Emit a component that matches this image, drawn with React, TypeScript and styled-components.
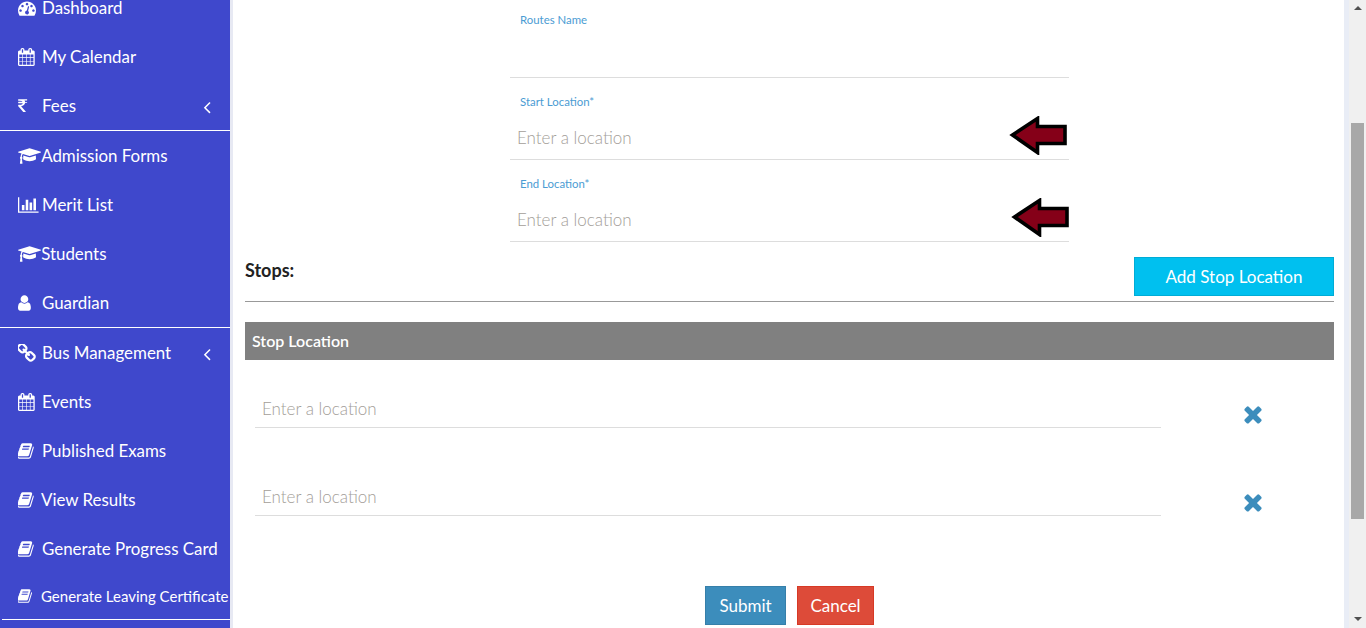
import React from 'react';
import styled, { createGlobalStyle } from 'styled-components';

const GlobalStyle = createGlobalStyle`
  html, body {
    margin: 0;
    height: 100%;
    overflow: hidden;
    font-family: "Lato", "Noto Sans", sans-serif;
  }
  * { box-sizing: border-box; }
`;

// glyph outlines in the old 1792 unit grid the page's icon font used
const glyphs = {
  dashboard: {
    box: '0 0 1792 1792',
    d: 'M384 1152q0-53-37.5-90.5t-90.5-37.5-90.5 37.5-37.5 90.5 37.5 90.5 90.5 37.5 90.5-37.5 37.5-90.5zm192-448q0-53-37.5-90.5t-90.5-37.5-90.5 37.5-37.5 90.5 37.5 90.5 90.5 37.5 90.5-37.5 37.5-90.5zm428 481l101-382q6-26-7.5-48.5t-38.5-29.5-48 6.5-30 39.5l-101 382q-60 5-107 43.5t-63 98.5q-20 77 20 146t117 89 146-20 89-117q16-60-6-117t-72-91zm660-33q0-53-37.5-90.5t-90.5-37.5-90.5 37.5-37.5 90.5 37.5 90.5 90.5 37.5 90.5-37.5 37.5-90.5zm-640-640q0-53-37.5-90.5t-90.5-37.5-90.5 37.5-37.5 90.5 37.5 90.5 90.5 37.5 90.5-37.5 37.5-90.5zm448 192q0-53-37.5-90.5t-90.5-37.5-90.5 37.5-37.5 90.5 37.5 90.5 90.5 37.5 90.5-37.5 37.5-90.5zm320 448q0 261-141 483-19 29-54 29h-1402q-35 0-54-29-141-221-141-483 0-182 71-348t191-286 286-191 348-71 348 71 286 191 191 286 71 348z',
  },
  calendar: {
    box: '64 0 1664 1792',
    d: 'M192 1664h288v-288h-288v288zm352 0h320v-288h-320v288zm-352-352h288v-320h-288v320zm352 0h320v-320h-320v320zm-352-384h288v-288h-288v288zm736 736h320v-288h-320v288zm-384-736h320v-288h-320v288zm768 736h288v-288h-288v288zm-384-352h320v-320h-320v320zm-352-864v-288q0-13-9.5-22.5t-22.5-9.5h-64q-13 0-22.5 9.5t-9.5 22.5v288q0 13 9.5 22.5t22.5 9.5h64q13 0 22.5-9.5t9.5-22.5zm736 864h288v-320h-288v320zm-384-384h320v-288h-320v288zm384 0h288v-288h-288v288zm32-480v-288q0-13-9.5-22.5t-22.5-9.5h-64q-13 0-22.5 9.5t-9.5 22.5v288q0 13 9.5 22.5t22.5 9.5h64q13 0 22.5-9.5t9.5-22.5zm384-64v1280q0 52-38 90t-90 38h-1408q-52 0-90-38t-38-90v-1280q0-52 38-90t90-38h128v-96q0-66 47-113t113-47h64q66 0 113 47t47 113v96h384v-96q0-66 47-113t113-47h64q66 0 113 47t47 113v96h128q52 0 90 38t38 90z',
  },
  rupee: {
    box: '431 0 1000 1792',
    d: 'M1345 470v64q0 14-9 23t-23 9h-168q-23 144-129 234t-276 110q167 178 459 536 14 16 4 34-8 18-29 18h-195q-16 0-25-12-306-367-498-571-9-9-9-22v-80q0-14 9.5-23.5t22.5-9.5h112q132 0 212.5-43t102.5-125h-427q-14 0-23-9t-9-23v-64q0-14 9-23t23-9h413q-57-113-268-113h-145q-13 0-22.5-9.5t-9.5-22.5v-83q0-14 9-23t23-9h832q14 0 23 9t9 23v64q0 14-9 23t-23 9h-233q47 61 64 144h171q14 0 23 9t9 23z',
  },
  cap: {
    box: '0 0 2304 1792',
    d: 'M1774 836l18 316q4 69-82 128t-235 93.5-323 34.5-323-34.5-235-93.5-82-128l18-316 574 181q22 7 48 7t48-7zm530-324q0 23-22 31l-1120 352q-4 1-10 1t-10-1l-652-206q-43 34-71 111.5t-34 178.5q63 36 63 109 0 69-58 107l58 433q2 14-8 25-9 11-24 11h-192q-15 0-24-11-10-11-8-25l58-433q-58-38-58-107 0-73 65-111 11-207 98-330l-333-104q-22-8-22-31t22-31l1120-352q4-1 10-1t10 1l1120 352q22 8 22 31z',
  },
  bars: {
    box: '0 0 2048 1792',
    d: 'M640 896v512h-256v-512h256zm384-512v1024h-256v-1024h256zm1024 1152v128h-2048v-1536h128v1408h1920zm-640-896v768h-256v-768h256zm384-384v1152h-256v-1152h256z',
  },
  user: {
    box: '256 0 1280 1792',
    d: 'M1536 1399q0 109-62.5 187t-150.5 78h-854q-88 0-150.5-78t-62.5-187q0-85 8.5-160.5t31.5-152 58.5-131 94-89 134.5-34.5q131 128 313 128t313-128q76 0 134.5 34.5t94 89 58.5 131 31.5 152 8.5 160.5zm-256-887q0 159-112.5 271.5t-271.5 112.5-271.5-112.5-112.5-271.5 112.5-271.5 271.5-112.5 271.5 112.5 112.5 271.5z',
  },
  link: {
    box: '128 128 1536 1536',
    d: 'M1456 1216q0-40-28-68l-208-208q-28-28-68-28-42 0-72 32 3 3 19 18.5t21.5 21.5 15 19 13 25.5 3.5 27.5q0 40-28 68t-68 28q-15 0-27.5-3.5t-25.5-13-19-15-21.5-21.5-18.5-19q-33 31-33 73 0 40 28 68l206 207q27 27 68 27 40 0 68-26l147-146q28-28 28-67zm-703-705q0-40-28-68l-206-207q-28-28-68-28-39 0-68 27l-147 146q-28 28-28 67 0 40 28 68l208 208q27 27 68 27 42 0 72-31-3-3-19-18.5t-21.5-21.5-15-19-13-25.5-3.5-27.5q0-40 28-68t68-28q15 0 27.5 3.5t25.5 13 19 15 21.5 21.5 18.5 19q33-31 33-73zm895 705q0 120-85 203l-147 146q-83 83-203 83-121 0-204-85l-206-207q-83-83-83-203 0-123 88-209l-88-88q-86 88-208 88-120 0-204-84l-208-208q-84-84-84-204t85-203l147-146q83-83 203-83 121 0 204 85l206 207q83 83 83 203 0 123-88 209l88 88q86-88 208-88 120 0 204 84l208 208q84 84 84 204z',
  },
  book: {
    box: '96 0 1600 1792',
    d: 'M1639 478q40 57 18 129l-275 906q-19 64-76.5 107.5t-122.5 43.5h-923q-77 0-148.5-53.5t-99.5-131.5q-24-67-2-127 0-4 3-27t4-37q1-8-3-21.5t-3-19.5q2-11 8-21t16.5-23.5 16.5-23.5q23-38 45-91.5t30-91.5q3-10 .5-30t-.5-28q3-11 17-28t17-23q21-36 42-92t25-90q1-9-2.5-32t.5-28q4-13 22-30.5t22-22.5q19-26 42.5-84.5t27.5-96.5q1-8-3-25.5t-2-26.5q2-8 9-18t18-23 17-21q8-12 16.5-30.5t15-35 16-36 19.5-32 26.5-23.5 36-11.5 47.5 5.5l-1 3q38-9 51-9h761q74 0 114 56t18 130l-274 906q-36 119-71.5 153.5t-128.5 34.5h-869q-27 0-38 15-11 16-1 43 24 70 144 70h923q29 0 56-15.5t35-41.5l300-987q7-22 5-57 38 15 59 43zm-1064 2q-4 13 2 22.5t20 9.5h608q13 0 25.5-9.5t16.5-22.5l21-64q4-13-2-22.5t-20-9.5h-608q-13 0-25.5 9.5t-16.5 22.5zm-83 256q-4 13 2 22.5t20 9.5h608q13 0 25.5-9.5t16.5-22.5l21-64q4-13-2-22.5t-20-9.5h-608q-13 0-25.5 9.5t-16.5 22.5z',
  },
  times: {
    box: '0 0 1792 1792',
    d: 'M1490 1322q0 40-28 68l-136 136q-28 28-68 28t-68-28l-294-294-294 294q-28 28-68 28t-68-28l-136-136q-28-28-28-68t28-68l294-294-294-294q-28-28-28-68t28-68l136-136q28-28 68-28t68 28l294 294 294-294q28-28 68-28t68 28l136 136q28 28 28 68t-28 68l-294 294 294 294q28 28 28 68z',
  },
  angle: {
    box: '0 0 1792 1792',
    d: 'M1203 544q0 13-10 23l-393 393 393 393q10 10 10 23t-10 23l-50 50q-10 10-23 10t-23-10l-466-466q-10-10-10-23t10-23l466-466q10-10 23-10t23 10l50 50q10 10 10 23z',
  },
};

type GlyphName = keyof typeof glyphs;

const GlyphSvg = styled.svg`
  flex: none;
  height: 1em;
  width: auto;
  fill: currentColor;
`;

const Glyph = ({ name, className }: { name: GlyphName; className?: string }) => (
  <GlyphSvg className={className} viewBox={glyphs[name].box}>
    <path d={glyphs[name].d} />
  </GlyphSvg>
);

const Page = styled.div`
  display: flex;
  width: 1366px;
  height: 628px;
  overflow: hidden;
  background: #fff;
`;

const Sidebar = styled.nav`
  flex: 0 0 230px;
  height: 628px;
  overflow: hidden;
  background: #3f48cc;
  color: #fff;
`;

const NavList = styled.div`
  margin-top: -17px;
`;

const NavGroup = styled.div<{ $inset?: boolean }>`
  margin-left: ${(p) => (p.$inset ? '2px' : '0')};
  border-bottom: 1px solid #fff;
`;

const NavRow = styled.div<{ $small?: boolean; $inset?: boolean }>`
  display: flex;
  align-items: center;
  height: ${(p) => (p.$small ? '46px' : '49px')};
  padding-left: ${(p) => (p.$inset ? '16px' : '18px')};
  font-size: ${(p) => (p.$small ? '15px' : '16.9px')};
  white-space: nowrap;
`;

const NavIcon = styled.span<{ $small?: boolean; $tight?: boolean }>`
  flex: 0 0 ${(p) => (p.$tight ? '23px' : '24px')};
  display: flex;
  align-items: center;
  font-size: ${(p) => (p.$small ? '16px' : '18px')};
`;

const Caret = styled(Glyph)`
  margin: 2px 13px 0 auto;
  font-size: 20px;
`;

const Gutter = styled.div`
  flex: 0 0 3px;
  background: #e7e9f3;
`;

const Content = styled.main`
  flex: 1;
  min-width: 0;
  padding: 0 10px 0 12px;
`;

const FormColumn = styled.div`
  width: 559px;
  margin: -4px 0 0 265px;
`;

const Field = styled.div`
  position: relative;
  height: 82px;
  padding-top: 16px;
  border-bottom: 1px solid #ddd;
`;

const FieldLabel = styled.div`
  height: 15px;
  padding-left: 10px;
  font-size: 11.4px;
  line-height: 15px;
  color: #4b9cd3;
`;

const Placeholder = styled.div`
  margin-top: 17px;
  padding-left: 7px;
  font-size: 17px;
  font-weight: 300;
  line-height: 24px;
  color: #a39e98;
`;

const ArrowMark = styled.svg<{ $shift?: boolean }>`
  position: absolute;
  top: 38px;
  right: ${(p) => (p.$shift ? '0' : '2px')};
  width: 58px;
  height: 39px;
`;

const StopsHeader = styled.div`
  display: flex;
  justify-content: space-between;
  height: 60px;
  padding-top: 15px;
  border-bottom: 1px solid #999;
`;

const StopsTitle = styled.div`
  padding-top: 2px;
  font-size: 18px;
  font-weight: 700;
  color: #222;
`;

const AddButton = styled.button`
  width: 200px;
  height: 39px;
  border: 1px solid #00acd6;
  background: #00c0ef;
  color: #fff;
  font: inherit;
  font-size: 17px;
`;

const TableHead = styled.div`
  display: flex;
  align-items: center;
  height: 38px;
  margin-top: 20px;
  padding: 0 0 2px 7px;
  background: #808080;
  color: #fff;
  font-size: 16px;
  font-weight: 600;
`;

const StopRows = styled.div`
  padding-top: 20px;
`;

const StopRow = styled.div`
  display: flex;
  height: 88px;
  padding-left: 10px;
`;

const StopInput = styled.div`
  width: 906px;
  height: 48px;
  padding: 17px 0 0 7px;
  border-bottom: 1px solid #ddd;
  font-size: 17px;
  font-weight: 300;
  line-height: 24px;
  color: #a39e98;
`;

const RemoveIcon = styled(Glyph)`
  margin: 21px 0 0 79px;
  font-size: 26px;
  color: #3c8dbc;
`;

const Actions = styled.div`
  display: flex;
  justify-content: center;
  gap: 11px;
  margin-top: 30px;
`;

const ActionButton = styled.button<{ $danger?: boolean }>`
  width: ${(p) => (p.$danger ? '77px' : '81px')};
  height: 39px;
  padding: 0;
  border: 1px solid ${(p) => (p.$danger ? '#d73925' : '#367fa9')};
  background: ${(p) => (p.$danger ? '#dd4b39' : '#3c8dbc')};
  color: #fff;
  font: inherit;
  font-size: 17px;
`;

const Backdrop = styled.div`
  flex: 0 0 5px;
  background: #e9edf6;
`;

const Scrollbar = styled.div`
  flex: 0 0 17px;
  display: flex;
  flex-direction: column;
  align-items: center;
  background: #f0f0f0;
`;

const ScrollArrow = styled.svg<{ $down?: boolean }>`
  flex: 0 0 7px;
  width: 8px;
  margin-top: ${(p) => (p.$down ? 'auto' : '5px')};
  margin-bottom: ${(p) => (p.$down ? '6px' : '0')};
`;

const Thumb = styled.div`
  width: 13px;
  height: 396px;
  margin-top: 111px;
  background: #a8a8a8;
`;

const Arrow = ({ shift }: { shift?: boolean }) => (
  <ArrowMark $shift={shift} viewBox="0 0 58 39">
    <polygon
      points="3.5,19 28.5,2.5 28.5,10.5 56,10.5 56,27.5 28.5,27.5 28.5,36.5"
      fill="#850018"
      stroke="#000"
      strokeWidth="3.6"
    />
  </ArrowMark>
);

type Item = {
  icon: GlyphName;
  label: string;
  caret?: boolean;
  small?: boolean;
  tight?: boolean;
};

const topItems: Item[] = [
  { icon: 'dashboard', label: 'Dashboard' },
  { icon: 'calendar', label: 'My Calendar' },
  { icon: 'rupee', label: 'Fees', caret: true },
];

const midItems: Item[] = [
  { icon: 'cap', label: 'Admission Forms', tight: true },
  { icon: 'bars', label: 'Merit List' },
  { icon: 'cap', label: 'Students', tight: true },
  { icon: 'user', label: 'Guardian' },
];

const lowItems: Item[] = [
  { icon: 'link', label: 'Bus Management', caret: true },
  { icon: 'calendar', label: 'Events' },
  { icon: 'book', label: 'Published Exams' },
  { icon: 'book', label: 'View Results', tight: true },
  { icon: 'book', label: 'Generate Progress Card' },
  { icon: 'book', label: 'Generate Leaving Certificate', small: true, tight: true },
];

const renderItems = (items: Item[], inset?: boolean) =>
  items.map((item) => (
    <NavRow key={item.label} $small={item.small} $inset={inset}>
      <NavIcon $small={item.small} $tight={item.tight}>
        <Glyph name={item.icon} />
      </NavIcon>
      {item.label}
      {item.caret && <Caret name="angle" />}
    </NavRow>
  ));

const App: React.FC = () => {
  return (
    <Page>
      <GlobalStyle />
      <Sidebar>
        <NavList>
          <NavGroup>{renderItems(topItems)}</NavGroup>
          <NavGroup>{renderItems(midItems)}</NavGroup>
          <NavGroup $inset>{renderItems(lowItems, true)}</NavGroup>
        </NavList>
      </Sidebar>
      <Gutter />
      <Content>
        <FormColumn>
          <Field>
            <FieldLabel>Routes Name</FieldLabel>
          </Field>
          <Field>
            <FieldLabel>Start Location*</FieldLabel>
            <Placeholder>Enter a location</Placeholder>
            <Arrow />
          </Field>
          <Field>
            <FieldLabel>End Location*</FieldLabel>
            <Placeholder>Enter a location</Placeholder>
            <Arrow shift />
          </Field>
        </FormColumn>
        <StopsHeader>
          <StopsTitle>Stops:</StopsTitle>
          <AddButton>Add Stop Location</AddButton>
        </StopsHeader>
        <TableHead>Stop Location</TableHead>
        <StopRows>
          <StopRow>
            <StopInput>Enter a location</StopInput>
            <RemoveIcon name="times" />
          </StopRow>
          <StopRow>
            <StopInput>Enter a location</StopInput>
            <RemoveIcon name="times" />
          </StopRow>
        </StopRows>
        <Actions>
          <ActionButton>Submit</ActionButton>
          <ActionButton $danger>Cancel</ActionButton>
        </Actions>
      </Content>
      <Backdrop />
      <Scrollbar>
        <ScrollArrow viewBox="0 0 8 7">
          <polygon points="4,1 8,5 0,5" fill="#505050" />
        </ScrollArrow>
        <Thumb />
        <ScrollArrow $down viewBox="0 0 8 7">
          <polygon points="0,2 8,2 4,6" fill="#505050" />
        </ScrollArrow>
      </Scrollbar>
    </Page>
  );
};

export default App;
